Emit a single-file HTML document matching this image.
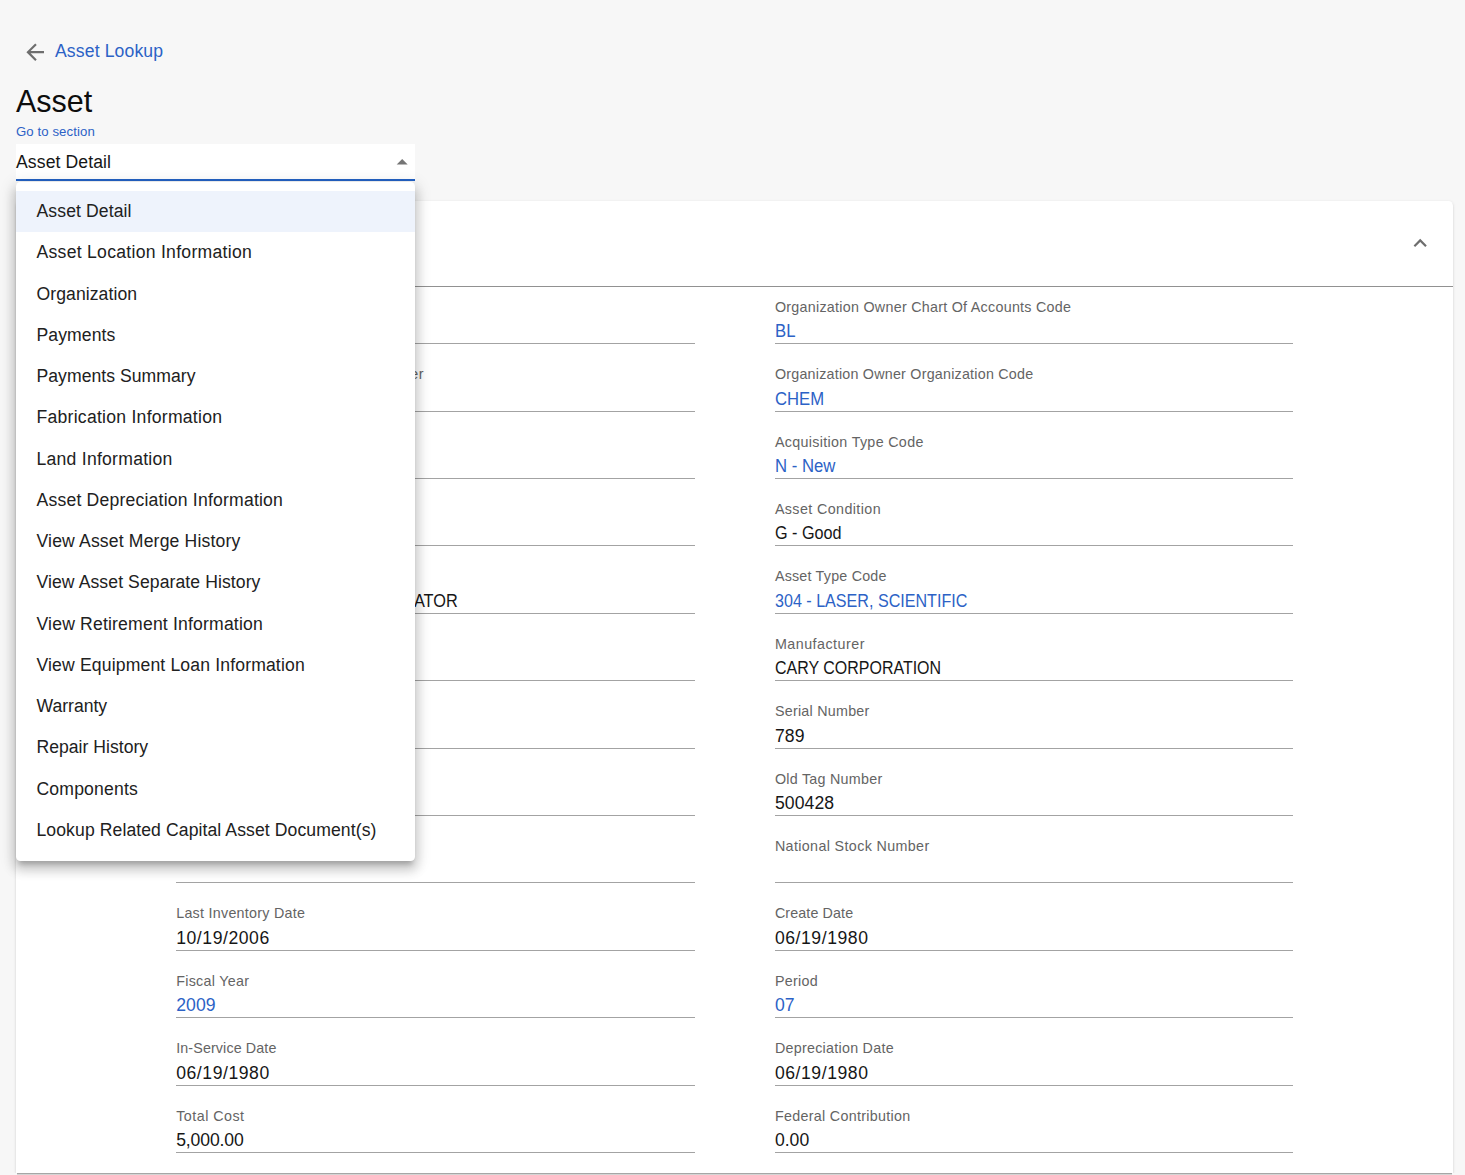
<!DOCTYPE html>
<html lang="en"><head><meta charset="utf-8"><title>Asset</title>
<style>
html,body{margin:0;padding:0;}
body{width:1465px;height:1175px;overflow:hidden;position:relative;background:#f7f7f7;font-family:"Liberation Sans", sans-serif;}
.t{position:absolute;white-space:nowrap;display:block;margin:0;padding:0;font-weight:400;list-style:none;text-decoration:none;}
.p{display:inline-block;width:0;height:0;vertical-align:baseline}
.card{position:absolute;left:16px;top:201px;width:1437px;height:972px;background:#fff;border-radius:4.4px 4.4px 0 0;
 box-shadow:0 2.2px 1.1px -1.1px rgba(0,0,0,.2),0 1.1px 1.1px 0 rgba(0,0,0,.14),0 1.1px 3.3px 0 rgba(0,0,0,.12);clip-path:inset(-10px -10px 0 -10px);}
.cb1{position:absolute;left:17px;top:1173px;width:1435px;height:1px;background:#a6a6a6;}
.cb2{position:absolute;left:17px;top:1174px;width:1435px;height:1px;background:#d4d4d4;}
.hr{position:absolute;left:16px;top:286px;width:1437px;height:1px;background:#919191;}
.ul{position:absolute;height:1px;background:#a3a3a3;}
.sel{position:absolute;left:16px;top:144px;width:399px;height:35px;background:#fff;}
.selu{position:absolute;left:16px;top:179px;width:399px;height:2px;background:#2462c4;}
.menu{position:absolute;left:16px;top:182px;width:399px;height:679px;background:#fff;border-radius:4.4px;
 box-shadow:0 5.5px 5.5px -3.3px rgba(0,0,0,.2),0 8.8px 11px 1.1px rgba(0,0,0,.14),0 3.3px 15.4px 2.2px rgba(0,0,0,.12);}
.hl{position:absolute;left:16px;top:191px;width:399px;height:41px;background:#eef3fc;}
svg{position:absolute;display:block}
</style></head><body>
<svg style="left:22.1px;top:39px" width="26.4" height="26.4" viewBox="0 0 24 24"><path fill="#6e6e6e" d="M20 11H7.83l5.59-5.59L12 4l-8 8 8 8 1.41-1.41L7.83 13H20v-2z"/></svg>
<div class="sel"></div>
<a class="t" id="a0" style="left:55px;top:38px;font-size:17.6px;line-height:26px;color:#2c62c6;letter-spacing:0.133px;">Asset Lookup</a>
<h1 class="t" id="a1" style="left:16px;top:78px;font-size:30.5px;line-height:46px;color:#0d0d0d;letter-spacing:-0.036px;">Asset</h1>
<a class="t" id="a2" style="left:16px;top:122px;font-size:13.2px;line-height:20px;color:#2c62c6;letter-spacing:0.086px;">Go to section</a>
<span class="t" id="a3" style="left:16px;top:149px;font-size:17.6px;line-height:26px;color:#161616;letter-spacing:0.099px;">Asset Detail</span>
<svg style="left:388.5px;top:148.9px" width="26.4" height="26.4" viewBox="0 0 24 24"><path fill="#757575" d="M7 14l5-5 5 5z"/></svg>
<div class="card"></div>
<div class="cb1"></div><div class="cb2"></div>
<div class="hr"></div>
<svg style="left:1406.9px;top:229.9px" width="26.4" height="26.4" viewBox="0 0 24 24"><path fill="#6e6e6e" d="M12 8l-6 6 1.41 1.41L12 10.83l4.59 4.59L18 14z"/></svg>
<div class="ul" style="left:176px;top:343px;width:519px"></div>
<div class="ul" style="left:176px;top:411px;width:519px"></div>
<div class="ul" style="left:176px;top:478px;width:519px"></div>
<div class="ul" style="left:176px;top:545px;width:519px"></div>
<div class="ul" style="left:176px;top:613px;width:519px"></div>
<div class="ul" style="left:176px;top:680px;width:519px"></div>
<div class="ul" style="left:176px;top:748px;width:519px"></div>
<div class="ul" style="left:176px;top:815px;width:519px"></div>
<div class="ul" style="left:176px;top:882px;width:519px"></div>
<div class="ul" style="left:176px;top:950px;width:519px"></div>
<div class="ul" style="left:176px;top:1017px;width:519px"></div>
<div class="ul" style="left:176px;top:1085px;width:519px"></div>
<div class="ul" style="left:176px;top:1152px;width:519px"></div>
<div class="ul" style="left:775px;top:343px;width:518px"></div>
<div class="ul" style="left:775px;top:411px;width:518px"></div>
<div class="ul" style="left:775px;top:478px;width:518px"></div>
<div class="ul" style="left:775px;top:545px;width:518px"></div>
<div class="ul" style="left:775px;top:613px;width:518px"></div>
<div class="ul" style="left:775px;top:680px;width:518px"></div>
<div class="ul" style="left:775px;top:748px;width:518px"></div>
<div class="ul" style="left:775px;top:815px;width:518px"></div>
<div class="ul" style="left:775px;top:882px;width:518px"></div>
<div class="ul" style="left:775px;top:950px;width:518px"></div>
<div class="ul" style="left:775px;top:1017px;width:518px"></div>
<div class="ul" style="left:775px;top:1085px;width:518px"></div>
<div class="ul" style="left:775px;top:1152px;width:518px"></div>
<label class="t" id="c0" style="left:176.2px;top:297px;font-size:14.3px;line-height:21px;color:#646464;letter-spacing:0.373px;">Asset Number</label>
<a class="t" id="c1" style="left:176.2px;top:318px;font-size:17.6px;line-height:26px;color:#2c62c6;letter-spacing:0.102px;">392832</a>
<label class="t" id="c2" style="left:176.2px;top:364px;font-size:14.3px;line-height:21px;color:#646464;letter-spacing:0.325px;">Organization Owner Account Number</label>
<a class="t" id="c3" style="left:176.2px;top:386px;font-size:17.6px;line-height:26px;color:#2c62c6;letter-spacing:0.103px;">1031400</a>
<label class="t" id="c4" style="left:176.2px;top:432px;font-size:14.3px;line-height:21px;color:#646464;letter-spacing:0.099px;">Owner</label>
<label class="t" id="c5" style="left:176.2px;top:499px;font-size:14.3px;line-height:21px;color:#646464;letter-spacing:0.281px;">Asset Status Code</label>
<a class="t" id="c6" style="left:176.2px;top:520px;font-size:17.6px;line-height:26px;color:#2c62c6;letter-spacing:-0.101px;">A - Active</a>
<label class="t" id="c7" style="left:176.2px;top:566px;font-size:14.3px;line-height:21px;color:#646464;letter-spacing:0.401px;">Asset Description</label>
<span class="t" id="c8" style="left:176.2px;top:588px;font-size:17.6px;line-height:26px;color:#161616;transform:scaleX(0.9264);transform-origin:0 0;">LASER, TUNABLE DYE OSCILLATOR</span>
<label class="t" id="c9" style="left:176.2px;top:634px;font-size:14.3px;line-height:21px;color:#646464;letter-spacing:0.300px;">Vendor Name</label>
<span class="t" id="c10" style="left:176.2px;top:655px;font-size:17.6px;line-height:26px;color:#161616;transform:scaleX(0.9085);transform-origin:0 0;">CARY CORPORATION</span>
<label class="t" id="c11" style="left:176.2px;top:701px;font-size:14.3px;line-height:21px;color:#646464;letter-spacing:0.391px;">Model Number</label>
<span class="t" id="c12" style="left:176.2px;top:723px;font-size:17.6px;line-height:26px;color:#161616;transform:scaleX(0.9374);transform-origin:0 0;">CR-599</span>
<label class="t" id="c13" style="left:176.2px;top:769px;font-size:14.3px;line-height:21px;color:#646464;letter-spacing:0.370px;">Tag Number</label>
<span class="t" id="c14" style="left:176.2px;top:790px;font-size:17.6px;line-height:26px;color:#161616;letter-spacing:0.102px;">500428</span>
<label class="t" id="c15" style="left:176.2px;top:836px;font-size:14.3px;line-height:21px;color:#646464;letter-spacing:0.270px;">Government Tag</label>
<label class="t" id="c16" style="left:176.2px;top:903px;font-size:14.3px;line-height:21px;color:#646464;letter-spacing:0.266px;">Last Inventory Date</label>
<span class="t" id="c17" style="left:176.2px;top:925px;font-size:17.6px;line-height:26px;color:#161616;letter-spacing:0.556px;">10/19/2006</span>
<label class="t" id="c18" style="left:176.2px;top:971px;font-size:14.3px;line-height:21px;color:#646464;letter-spacing:0.290px;">Fiscal Year</label>
<a class="t" id="c19" style="left:176.2px;top:992px;font-size:17.6px;line-height:26px;color:#2c62c6;letter-spacing:0.105px;">2009</a>
<label class="t" id="c20" style="left:176.2px;top:1038px;font-size:14.3px;line-height:21px;color:#646464;letter-spacing:0.119px;">In-Service Date</label>
<span class="t" id="c21" style="left:176.2px;top:1060px;font-size:17.6px;line-height:26px;color:#161616;letter-spacing:0.556px;">06/19/1980</span>
<label class="t" id="c22" style="left:176.2px;top:1106px;font-size:14.3px;line-height:21px;color:#646464;letter-spacing:0.482px;">Total Cost</label>
<span class="t" id="c23" style="left:176.2px;top:1127px;font-size:17.6px;line-height:26px;color:#161616;letter-spacing:-0.133px;">5,000.00</span>
<label class="t" id="c24" style="left:774.9px;top:297px;font-size:14.3px;line-height:21px;color:#646464;letter-spacing:0.271px;">Organization Owner Chart Of Accounts Code</label>
<a class="t" id="c25" style="left:774.9px;top:318px;font-size:17.6px;line-height:26px;color:#2c62c6;transform:scaleX(0.9492);transform-origin:0 0;">BL</a>
<label class="t" id="c26" style="left:774.9px;top:364px;font-size:14.3px;line-height:21px;color:#646464;letter-spacing:0.226px;">Organization Owner Organization Code</label>
<a class="t" id="c27" style="left:774.9px;top:386px;font-size:17.6px;line-height:26px;color:#2c62c6;transform:scaleX(0.9483);transform-origin:0 0;">CHEM</a>
<label class="t" id="c28" style="left:774.9px;top:432px;font-size:14.3px;line-height:21px;color:#646464;letter-spacing:0.324px;">Acquisition Type Code</label>
<a class="t" id="c29" style="left:774.9px;top:453px;font-size:17.6px;line-height:26px;color:#2c62c6;transform:scaleX(0.9506);transform-origin:0 0;">N - New</a>
<label class="t" id="c30" style="left:774.9px;top:499px;font-size:14.3px;line-height:21px;color:#646464;letter-spacing:0.397px;">Asset Condition</label>
<span class="t" id="c31" style="left:774.9px;top:520px;font-size:17.6px;line-height:26px;color:#161616;transform:scaleX(0.9202);transform-origin:0 0;">G - Good</span>
<label class="t" id="c32" style="left:774.9px;top:566px;font-size:14.3px;line-height:21px;color:#646464;letter-spacing:0.210px;">Asset Type Code</label>
<a class="t" id="c33" style="left:774.9px;top:588px;font-size:17.6px;line-height:26px;color:#2c62c6;transform:scaleX(0.9149);transform-origin:0 0;">304 - LASER, SCIENTIFIC</a>
<label class="t" id="c34" style="left:774.9px;top:634px;font-size:14.3px;line-height:21px;color:#646464;letter-spacing:0.485px;">Manufacturer</label>
<span class="t" id="c35" style="left:774.9px;top:655px;font-size:17.6px;line-height:26px;color:#161616;transform:scaleX(0.9085);transform-origin:0 0;">CARY CORPORATION</span>
<label class="t" id="c36" style="left:774.9px;top:701px;font-size:14.3px;line-height:21px;color:#646464;letter-spacing:0.255px;">Serial Number</label>
<span class="t" id="c37" style="left:774.9px;top:723px;font-size:17.6px;line-height:26px;color:#161616;letter-spacing:0.104px;">789</span>
<label class="t" id="c38" style="left:774.9px;top:769px;font-size:14.3px;line-height:21px;color:#646464;letter-spacing:0.266px;">Old Tag Number</label>
<span class="t" id="c39" style="left:774.9px;top:790px;font-size:17.6px;line-height:26px;color:#161616;letter-spacing:0.102px;">500428</span>
<label class="t" id="c40" style="left:774.9px;top:836px;font-size:14.3px;line-height:21px;color:#646464;letter-spacing:0.364px;">National Stock Number</label>
<label class="t" id="c41" style="left:774.9px;top:903px;font-size:14.3px;line-height:21px;color:#646464;letter-spacing:0.114px;">Create Date</label>
<span class="t" id="c42" style="left:774.9px;top:925px;font-size:17.6px;line-height:26px;color:#161616;letter-spacing:0.556px;">06/19/1980</span>
<label class="t" id="c43" style="left:774.9px;top:971px;font-size:14.3px;line-height:21px;color:#646464;letter-spacing:0.296px;">Period</label>
<a class="t" id="c44" style="left:774.9px;top:992px;font-size:17.6px;line-height:26px;color:#2c62c6;letter-spacing:0.102px;">07</a>
<label class="t" id="c45" style="left:774.9px;top:1038px;font-size:14.3px;line-height:21px;color:#646464;letter-spacing:0.266px;">Depreciation Date</label>
<span class="t" id="c46" style="left:774.9px;top:1060px;font-size:17.6px;line-height:26px;color:#161616;letter-spacing:0.556px;">06/19/1980</span>
<label class="t" id="c47" style="left:774.9px;top:1106px;font-size:14.3px;line-height:21px;color:#646464;letter-spacing:0.303px;">Federal Contribution</label>
<span class="t" id="c48" style="left:774.9px;top:1127px;font-size:17.6px;line-height:26px;color:#161616;letter-spacing:0.016px;">0.00</span>
<h2 class="t" id="c49" style="left:40px;top:227px;font-size:22px;line-height:33px;color:#161616;letter-spacing:-0.003px;">Asset Detail</h2>
<div class="selu"></div>
<div class="menu"></div>
<div class="hl"></div>
<ul style="margin:0;padding:0;list-style:none">
<li class="t" id="m0" style="left:36.5px;top:198px;font-size:17.6px;line-height:26px;color:#212121;letter-spacing:0.099px;">Asset Detail</li>
<li class="t" id="m1" style="left:36.5px;top:239px;font-size:17.6px;line-height:26px;color:#212121;letter-spacing:0.277px;">Asset Location Information</li>
<li class="t" id="m2" style="left:36.5px;top:281px;font-size:17.6px;line-height:26px;color:#212121;letter-spacing:0.073px;">Organization</li>
<li class="t" id="m3" style="left:36.5px;top:322px;font-size:17.6px;line-height:26px;color:#212121;letter-spacing:0.082px;">Payments</li>
<li class="t" id="m4" style="left:36.5px;top:363px;font-size:17.6px;line-height:26px;color:#212121;letter-spacing:0.042px;">Payments Summary</li>
<li class="t" id="m5" style="left:36.5px;top:404px;font-size:17.6px;line-height:26px;color:#212121;letter-spacing:0.253px;">Fabrication Information</li>
<li class="t" id="m6" style="left:36.5px;top:446px;font-size:17.6px;line-height:26px;color:#212121;letter-spacing:0.250px;">Land Information</li>
<li class="t" id="m7" style="left:36.5px;top:487px;font-size:17.6px;line-height:26px;color:#212121;letter-spacing:0.200px;">Asset Depreciation Information</li>
<li class="t" id="m8" style="left:36.5px;top:528px;font-size:17.6px;line-height:26px;color:#212121;letter-spacing:0.158px;">View Asset Merge History</li>
<li class="t" id="m9" style="left:36.5px;top:569px;font-size:17.6px;line-height:26px;color:#212121;letter-spacing:0.087px;">View Asset Separate History</li>
<li class="t" id="m10" style="left:36.5px;top:611px;font-size:17.6px;line-height:26px;color:#212121;letter-spacing:0.177px;">View Retirement Information</li>
<li class="t" id="m11" style="left:36.5px;top:652px;font-size:17.6px;line-height:26px;color:#212121;letter-spacing:0.148px;">View Equipment Loan Information</li>
<li class="t" id="m12" style="left:36.5px;top:693px;font-size:17.6px;line-height:26px;color:#212121;letter-spacing:-0.009px;">Warranty</li>
<li class="t" id="m13" style="left:36.5px;top:734px;font-size:17.6px;line-height:26px;color:#212121;letter-spacing:0.010px;">Repair History</li>
<li class="t" id="m14" style="left:36.5px;top:776px;font-size:17.6px;line-height:26px;color:#212121;letter-spacing:0.167px;">Components</li>
<li class="t" id="m15" style="left:36.5px;top:817px;font-size:17.6px;line-height:26px;color:#212121;letter-spacing:0.089px;">Lookup Related Capital Asset Document(s)</li>
</ul>
</body></html>
